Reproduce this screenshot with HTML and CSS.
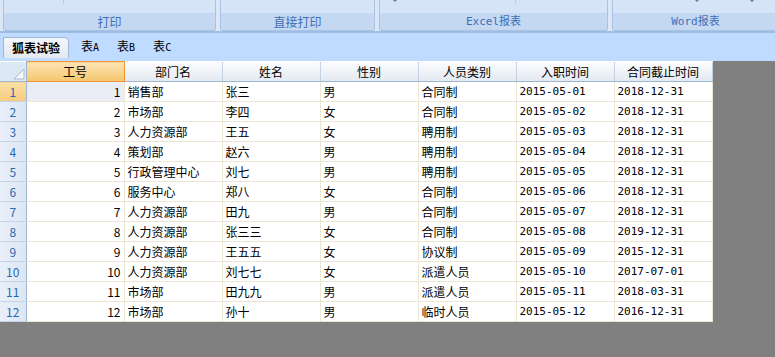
FILE: index.html
```html
<!DOCTYPE html>
<html>
<head>
  <meta charset="utf-8">
  <title>狐表试验</title>
  <link rel="stylesheet" href="styles.css">
</head>
<body>
  <div class="ribbon">
    <div class="group g1"><div class="top"><span class="stub" style="left:59px"></span></div><div class="label">打印</div></div>
    <div class="group g2"><div class="top"></div><div class="label">直接打印</div></div>
    <div class="group g3"><div class="top"><span class="stub" style="left:135px"></span><span class="arrow" style="left:13px"></span></div><div class="label mono">Excel报表</div></div>
    <div class="group g4"><div class="top"><span class="arrow" style="left:82px"></span><span class="arrow" style="left:137px"></span></div><div class="label mono">Word报表</div></div>
  </div>
  <div class="tabs">
    <div class="tab active">狐表试验</div>
    <div class="tab">表<span class="mono">A</span></div>
    <div class="tab">表<span class="mono">B</span></div>
    <div class="tab">表<span class="mono">C</span></div>
  </div>
  <div class="sheet">
    <table class="grid">
      <colgroup>
        <col style="width:26px"><col style="width:98px"><col style="width:98px"><col style="width:98px">
        <col style="width:98px"><col style="width:98px"><col style="width:98px"><col style="width:98px">
      </colgroup>
      <thead>
        <tr>
          <th class="corner"><svg width="12" height="12" viewBox="0 0 12 12"><polygon points="11,1 11,11 1,11" fill="#f4f7fb" stroke="#a9bcd3" stroke-width="1"/></svg></th>
          <th class="sel">工号</th><th>部门名</th><th>姓名</th><th>性别</th><th>人员类别</th><th>入职时间</th><th>合同截止时间</th>
        </tr>
      </thead>
      <tbody>
        <tr><td class="rh sel">1</td><td class="num cur">1</td><td>销售部</td><td>张三</td><td>男</td><td>合同制</td><td class="d">2015-05-01</td><td class="d">2018-12-31</td></tr>
        <tr><td class="rh">2</td><td class="num">2</td><td>市场部</td><td>李四</td><td>女</td><td>合同制</td><td class="d">2015-05-02</td><td class="d">2018-12-31</td></tr>
        <tr><td class="rh">3</td><td class="num">3</td><td>人力资源部</td><td>王五</td><td>女</td><td>聘用制</td><td class="d">2015-05-03</td><td class="d">2018-12-31</td></tr>
        <tr><td class="rh">4</td><td class="num">4</td><td>策划部</td><td>赵六</td><td>男</td><td>聘用制</td><td class="d">2015-05-04</td><td class="d">2018-12-31</td></tr>
        <tr><td class="rh">5</td><td class="num">5</td><td>行政管理中心</td><td>刘七</td><td>男</td><td>聘用制</td><td class="d">2015-05-05</td><td class="d">2018-12-31</td></tr>
        <tr><td class="rh">6</td><td class="num">6</td><td>服务中心</td><td>郑八</td><td>女</td><td>合同制</td><td class="d">2015-05-06</td><td class="d">2018-12-31</td></tr>
        <tr><td class="rh">7</td><td class="num">7</td><td>人力资源部</td><td>田九</td><td>男</td><td>合同制</td><td class="d">2015-05-07</td><td class="d">2018-12-31</td></tr>
        <tr><td class="rh">8</td><td class="num">8</td><td>人力资源部</td><td>张三三</td><td>女</td><td>合同制</td><td class="d">2015-05-08</td><td class="d">2019-12-31</td></tr>
        <tr><td class="rh">9</td><td class="num">9</td><td>人力资源部</td><td>王五五</td><td>女</td><td>协议制</td><td class="d">2015-05-09</td><td class="d">2015-12-31</td></tr>
        <tr><td class="rh">10</td><td class="num">10</td><td>人力资源部</td><td>刘七七</td><td>女</td><td>派遣人员</td><td class="d">2015-05-10</td><td class="d">2017-07-01</td></tr>
        <tr><td class="rh">11</td><td class="num">11</td><td>市场部</td><td>田九九</td><td>男</td><td>派遣人员</td><td class="d">2015-05-11</td><td class="d">2018-03-31</td></tr>
        <tr><td class="rh">12</td><td class="num">12</td><td>市场部</td><td>孙十</td><td>男</td><td>临时人员</td><td class="d">2015-05-12</td><td class="d">2016-12-31</td></tr>
      </tbody>
    </table>
  </div>
</body>
</html>
```

FILE: styles.css
```css
body {
  margin: 0;
  background: #808080;
  font-family: "Noto Sans CJK SC", "DejaVu Sans", sans-serif;
  font-size: 12px;
  color: #000;
  overflow: hidden;
}

.mono {
  font-family: "DejaVu Sans Mono", "Noto Sans CJK SC", monospace;
  font-size: 10px;
}

/* ribbon */
.ribbon {
  display: flex;
  gap: 4px;
  height: 31px;
  padding-left: 3px;
  background: #dbe7f6;
  border-bottom: 2px solid #9ebde4;
  overflow: hidden;
}
.group {
  display: flex;
  flex-direction: column;
  border: 1px solid #a8c3e3;
  border-top: none;
  border-radius: 0 0 3px 3px;
  background: #c4d9f1;
  height: 30px;
}
.g1 { width: 211px; }
.g2 { width: 153px; }
.g3 { width: 227px; }
.g4 { flex: 1; margin-right: -4px; }
.group .top {
  position: relative;
  height: 13px;
  background: #d5e4f6;
}
.stub {
  position: absolute;
  top: 0;
  width: 1px;
  height: 4px;
  background: #b7cbe4;
}
.arrow {
  position: absolute;
  top: 0;
  border-left: 2px solid transparent;
  border-right: 2px solid transparent;
  border-top: 2px solid #5d7fae;
}
.label {
  flex: 1;
  text-align: center;
  line-height: 17px;
  color: #3f6db5;
}
.label.mono { font-size: 11px; }

/* sheet tabs */
.tabs {
  display: flex;
  align-items: flex-end;
  height: 25px;
  padding-left: 3px;
  background: #bfdbff;
}
.tab {
  padding: 0 9px;
  line-height: 20px;
  color: #000;
}
.tab .mono { font-size: 10px; }
.tab.active {
  font-weight: bold;
  padding: 0 8px;
  background: linear-gradient(#f4f7fb, #e3e9f2);
  border: 1px solid #9fb6d1;
  border-bottom: none;
  border-radius: 0 5px 0 0;
  margin-right: 3px;
}

/* grid */
.sheet {
  padding-top: 3px;
  background: linear-gradient(#bfdbff 0, #bfdbff 3px, #808080 3px);
}
.grid {
  width: 712px;
  table-layout: fixed;
  border-collapse: collapse;
  background: #fff;
}
.grid th, .grid td {
  height: 19px;
  padding: 0 3px;
  white-space: nowrap;
  overflow: hidden;
}
.grid th {
  font-weight: normal;
  text-align: center;
  background: linear-gradient(#fbfcfe, #e3e9f1);
  border-right: 1px solid #c5d3e3;
  border-bottom: 1px solid #9eb6ce;
}
.grid th.sel {
  background: linear-gradient(#fce4b4, #f4c66c);
  border: 1px solid #f29536;
}
.grid th.corner {
  background: #dde8f5;
  padding: 0;
  text-align: right;
  vertical-align: bottom;
  border-right: 1px solid #9eb6ce;
}
.grid th.corner svg { display: block; margin: 0 1px 1px auto; }
.grid td {
  border-right: 1px solid #ece6d4;
  border-bottom: 1px solid #ece6d4;
}
.grid td.rh {
  text-align: center;
  color: #2c67b1;
  background: linear-gradient(90deg, #e8eff9, #dbe6f4);
  border-right: 1px solid #9eb6ce;
  border-bottom: 1px solid #c5d3e3;
  padding: 0;
}
.grid td.rh.sel {
  background: linear-gradient(#fbe0a8, #f6cb7c);
  color: #2c67b1;
}
.grid td.num { text-align: right; }
.grid td.cur { background: #eaedf6; }
.grid td.d {
  font-family: "DejaVu Sans Mono", monospace;
  font-size: 11px;
}
```
